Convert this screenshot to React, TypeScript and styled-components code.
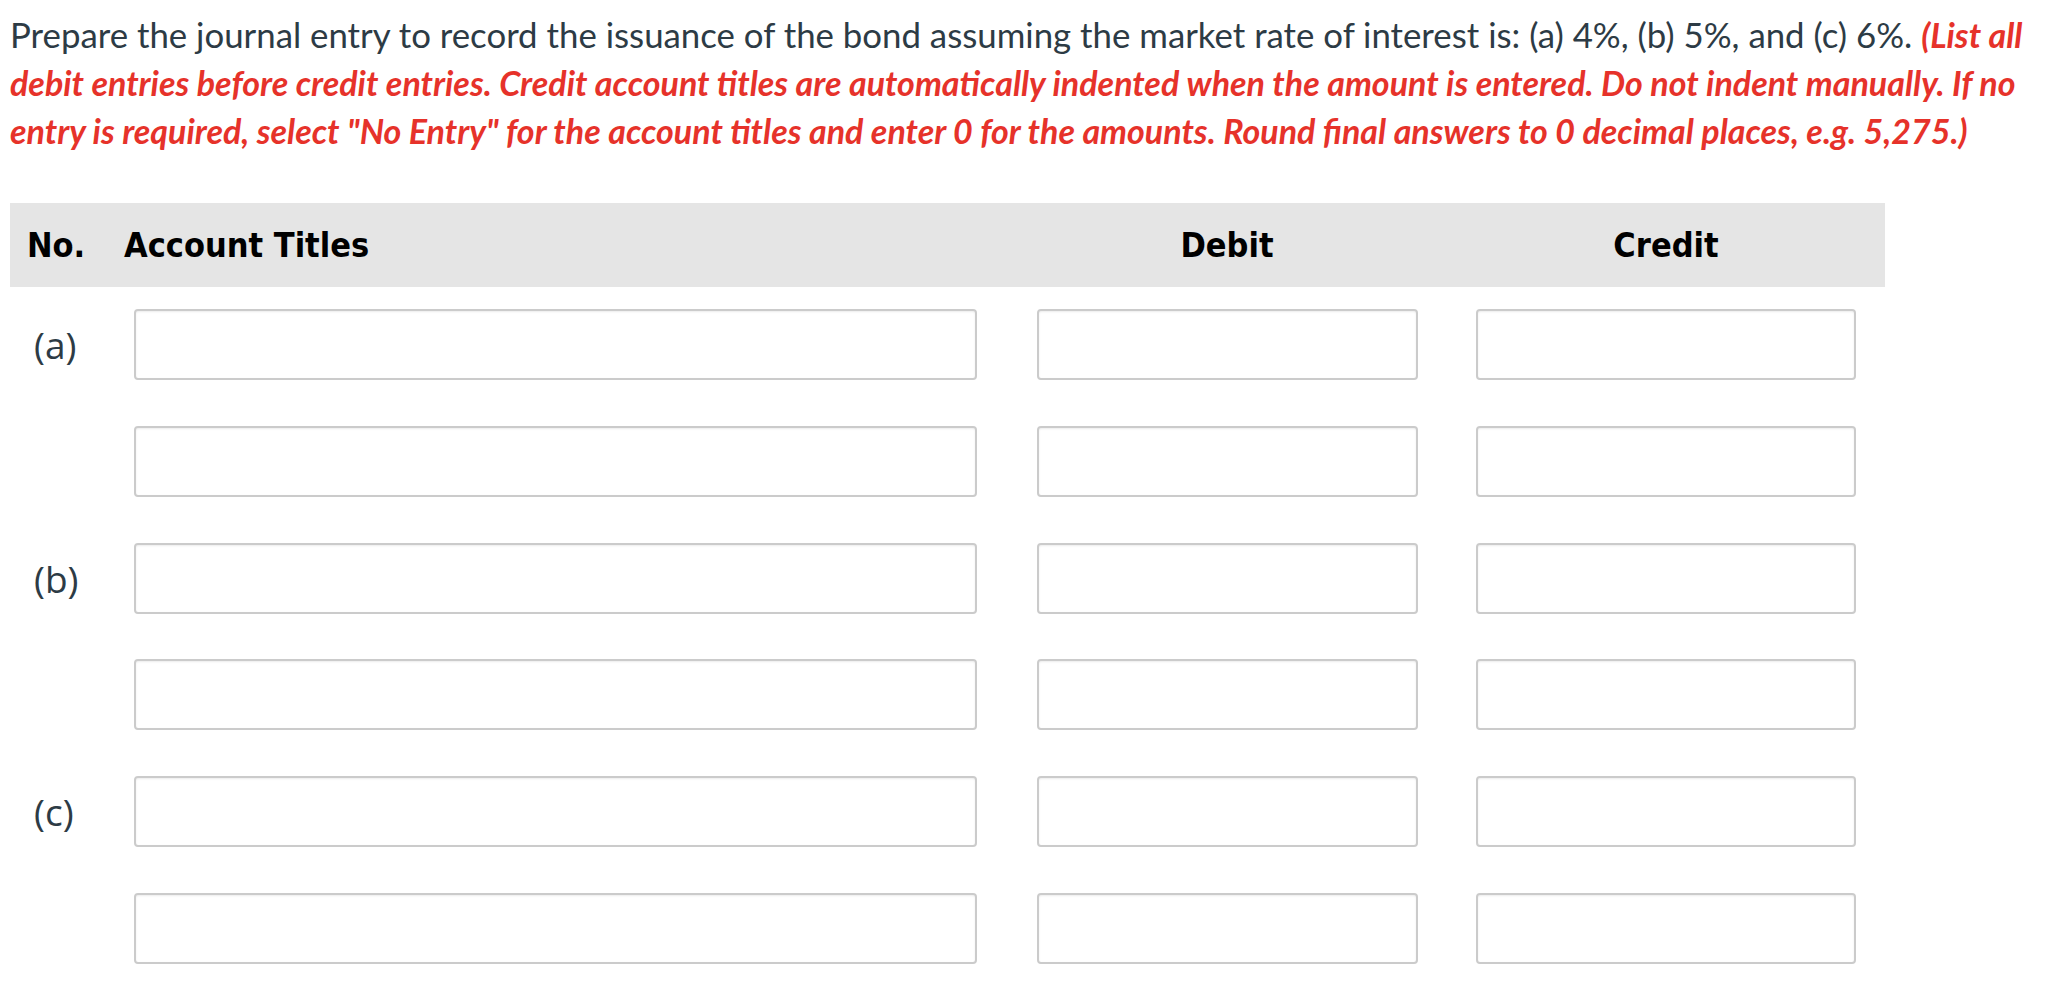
import styled, { createGlobalStyle } from 'styled-components';

const GlobalStyle = createGlobalStyle`
  body {
    margin: 0;
    background: #fff;
    font-family: Lato, "Open Sans", sans-serif;
  }
`;

const Page = styled.div`
  padding: 11px 10px 0 10px;
`;

const Prompt = styled.p`
  margin: 0;
  font-family: Lato, sans-serif;
  font-size: 34.8px;
  line-height: 48px;
  color: #2d3b45;
`;

const Note = styled.span`
  color: #e6322a;
  font-size: 34px;
  font-weight: 700;
  font-style: italic;
`;

const Table = styled.div`
  margin-top: 48px;
  width: 1875px;
`;

const columns = '114px 883px 440px 438px';

const HeaderRow = styled.div`
  display: grid;
  grid-template-columns: ${columns};
  align-items: center;
  height: 84px;
  background: #e5e5e5;
`;

const HeaderCell = styled.div<{ $align?: 'left' | 'center'; $pad?: number }>`
  font-family: "DejaVu Sans Condensed", "DejaVu Sans", Verdana, sans-serif;
  font-weight: 700;
  font-size: 34px;
  color: #000;
  text-align: ${(p) => p.$align ?? 'left'};
  padding-left: ${(p) => p.$pad ?? 0}px;
`;

const Body = styled.div`
  display: grid;
  row-gap: 45.8px;
  padding-top: 22px;
`;

const Row = styled.div`
  display: grid;
  grid-template-columns: ${columns};
  align-items: center;
`;

const Label = styled.div`
  padding-left: 24px;
  font-family: "Open Sans", "Noto Sans", sans-serif;
  font-size: 37px;
  color: #2d3b45;
`;

const Field = styled.input<{ $width: number; $offset?: number }>`
  box-sizing: border-box;
  width: ${(p) => p.$width}px;
  height: 71px;
  margin-left: ${(p) => p.$offset ?? 0}px;
  justify-self: ${(p) => (p.$offset === undefined ? 'center' : 'start')};
  border: 2px solid #cbcbcb;
  border-radius: 4px;
  box-shadow: inset 0 1px 2px rgba(0, 0, 0, 0.08);
  background: #fff;
  font-family: Lato, sans-serif;
  font-size: 28px;
  padding: 0 12px;
  outline: none;
`;

const rows = ['(a)', '', '(b)', '', '(c)', ''];

export default function App() {
  return (
    <>
      <GlobalStyle />
      <Page>
        <Prompt>
          Prepare the journal entry to record the issuance of the bond assuming the market rate of interest is: (a) 4%,
          (b) 5%, and (c) 6%.{' '}
          <Note>
            (List all debit entries before credit entries. Credit account titles are automatically indented when the
            amount is entered. Do not indent manually. If no entry is required, select "No Entry" for the account titles
            and enter 0 for the amounts. Round final answers to 0 decimal places, e.g. 5,275.)
          </Note>
        </Prompt>
        <Table>
          <HeaderRow>
            <HeaderCell $pad={17}>No.</HeaderCell>
            <HeaderCell>Account Titles</HeaderCell>
            <HeaderCell $align="center">Debit</HeaderCell>
            <HeaderCell $align="center">Credit</HeaderCell>
          </HeaderRow>
          <Body>
            {rows.map((label, i) => (
              <Row key={i}>
                <Label>{label}</Label>
                <Field type="text" $width={843} $offset={10} aria-label="Account title" />
                <Field type="text" $width={381} aria-label="Debit" />
                <Field type="text" $width={380} aria-label="Credit" />
              </Row>
            ))}
          </Body>
        </Table>
      </Page>
    </>
  );
}
